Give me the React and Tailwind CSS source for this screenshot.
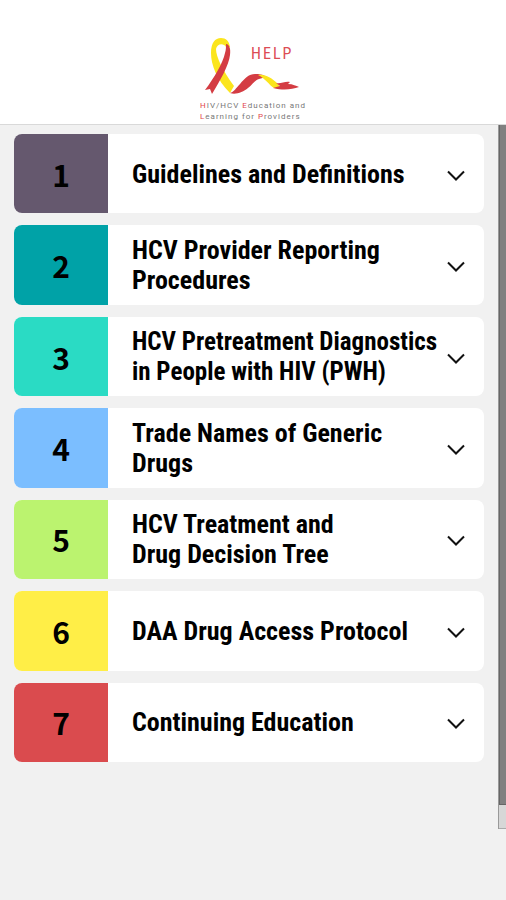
import React, { useState } from "react";

const regular = "text-[26px] leading-[30px]";
const compact = "text-[25px] leading-[30px]";

const sections = [
  { number: 1, color: "bg-[#65586e]", size: regular, lines: ["Guidelines and Definitions"] },
  { number: 2, color: "bg-[#00a2a7]", size: regular, lines: ["HCV Provider Reporting", "Procedures"] },
  { number: 3, color: "bg-[#2adbc4]", size: compact, lines: ["HCV Pretreatment Diagnostics", "in People with HIV (PWH)"] },
  { number: 4, color: "bg-[#7bbeff]", size: regular, lines: ["Trade Names of Generic", "Drugs"] },
  { number: 5, color: "bg-[#bbf36f]", size: regular, lines: ["HCV Treatment and", "Drug Decision Tree"] },
  { number: 6, color: "bg-[#ffee47]", size: regular, lines: ["DAA Drug Access Protocol"] },
  { number: 7, color: "bg-[#da4b4e]", size: regular, lines: ["Continuing Education"] },
];

function Logo() {
  return (
    <svg viewBox="0 0 114 86" className="h-[86px] w-[114px]" role="img" aria-label="HELP">
      <g transform="translate(2 1)">
        <path d="M13 15 C13 5 17 0 23 0 C28 0 31 3 32 9 L28 9 C26 5 19 5 18 11 C18 19 25 33 36 48 L32 55 C19 42 13 27 13 15Z" fill="#fbe51d" />
        <path d="M28 6 C31 6 33 10 32 17 C31 27 22 43 14 56 L12 51 L7 52 C16 40 25 25 27 15 C28 12 28 9 28 6Z" fill="#d43c43" />
        <path d="M32 55 C36 54 38 50 42 46 C47 40 51 36 57 36 C61 36 65 36 68 39 L61 41 C57 42 55 46 50 50 C45 54 38 57 32 55Z" fill="#d43c43" />
        <path d="M60 37 C68 36 73 40 79 45 L83 50 L76 50 C71 47 67 40 60 37Z" fill="#fbe51d" />
        <path d="M78 45 C83 46 87 43 92 44 L90 46 C95 46 98 48 101 49 C94 51 87 53 75 50 L82 48Z" fill="#d43c43" />
      </g>
      <text x="55" y="22" fontSize="16" letterSpacing="2" fill="#dc4d55" fontFamily="'Roboto Condensed', 'Liberation Sans Narrow', sans-serif">HELP</text>
      <g fontSize="8" letterSpacing="1" fill="#777" fontFamily="Roboto, 'Liberation Sans', sans-serif">
        <text x="4" y="71"><tspan fill="#e2474e">H</tspan>IV/HCV <tspan fill="#e2474e">E</tspan>ducation and</text>
        <text x="4" y="82"><tspan fill="#e2474e">L</tspan>earning for <tspan fill="#e2474e">P</tspan>roviders</text>
      </g>
    </svg>
  );
}

function Section({ number, color, size, lines, open, onToggle }) {
  return (
    <li className="flex">
      <button
        type="button"
        aria-expanded={open}
        onClick={onToggle}
        className="flex w-full items-stretch overflow-hidden rounded-lg bg-white text-left text-black"
      >
        <span className={`flex w-[94px] shrink-0 items-center justify-center font-['Noto_Sans_CJK_JP','Noto_Sans',sans-serif] text-[30px] leading-[30px] font-bold ${color}`}>
          {number}
        </span>
        <span className={`flex min-w-0 flex-1 flex-col justify-center pl-6 font-['Roboto_Condensed','Liberation_Sans_Narrow',Roboto,sans-serif] font-bold whitespace-nowrap ${size}`}>
          {lines.map((line) => (
            <span key={line}>{line}</span>
          ))}
        </span>
        <span className="flex w-12 shrink-0 items-center justify-center pr-2">
          <svg viewBox="0 0 18 12" className="mt-1 h-3 w-[18px]" fill="none" stroke="#111" strokeWidth="2" aria-hidden="true">
            <path d="M1 1.5 9 9.5 17 1.5" />
          </svg>
        </span>
      </button>
    </li>
  );
}

export default function App() {
  const [active, setActive] = useState(null);
  return (
    <div className="flex min-h-screen flex-col bg-[#f1f1f1]">
      <header className="flex h-[125px] shrink-0 justify-center border-b border-[#d9d9d9] bg-white pt-[37px]">
        <Logo />
      </header>
      <main className="flex items-start justify-between">
        <ul className="mx-[14px] mt-[9px] grid min-h-[628px] min-w-0 flex-1 auto-rows-fr grid-cols-1 gap-3">
          {sections.map((section) => (
            <Section
              key={section.number}
              {...section}
              open={active === section.number}
              onToggle={() => setActive(active === section.number ? null : section.number)}
            />
          ))}
        </ul>
        <div className="w-2 shrink-0 border-l border-[#999] bg-[#d7d7d7]" aria-hidden="true">
          <div className="h-[680px] border-b border-l border-[#666] bg-[#808080]" />
          <div className="h-6 border-b border-[#aaa]" />
        </div>
      </main>
    </div>
  );
}
